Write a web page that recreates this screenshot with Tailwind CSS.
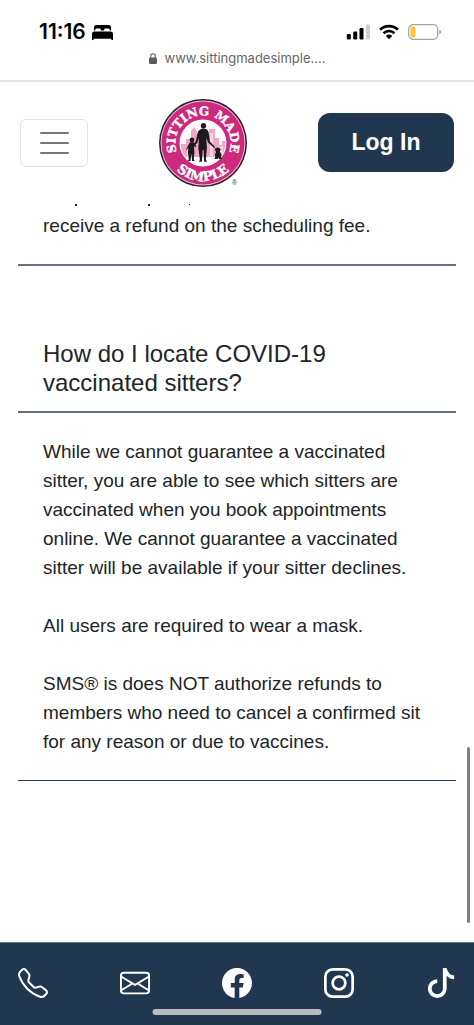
<!DOCTYPE html>
<html lang="en">
<head>
<meta charset="utf-8">
<meta name="viewport" content="width=device-width, initial-scale=1">
<title>Sitting Made Simple</title>
<script src="https://cdn.jsdelivr.net/npm/@tailwindcss/browser@4"></script>
</head>
<body class="relative flex min-h-screen flex-col bg-white font-['Liberation_Sans',Arial,sans-serif] text-[#212529]">

<!-- Phone status bar and address -->
<div class="flex flex-col border-b-2 border-[#e5e5e5] pt-5 pb-[10px] font-[Inter,sans-serif]">
  <div class="flex h-6 items-center justify-between pr-8 pl-[39px] text-black">
    <div class="flex items-center gap-[6px]">
      <span class="text-[21px] leading-6 font-semibold">11:16</span>
      <svg class="h-[15px] w-[21px]" viewBox="0 0 21 15" aria-hidden="true"><path d="M2 5.600V2.500Q2 0 4.500 0h12q2.500 0 2.500 2.500v3.100h-1.300v-.9q0-1.300-1.300-1.300h-3q-1.200 0-1.200 1.200v1H8.800v-1q0-1.200-1.200-1.200h-3Q3.300 3.400 3.300 4.700v.9zM0 9q0-2.400 2.400-2.400h16.200Q21 6.600 21 9v6h-1.600v-1.200H1.600V15H0z"/></svg>
    </div>
    <div class="flex items-center gap-[9px]">
      <svg class="h-4 w-6" viewBox="0 0 24 16" aria-hidden="true"><rect x="0.800" y="10" width="4" height="5.500" rx="1.200"/><rect x="7.200" y="7.500" width="4" height="8" rx="1.200"/><rect x="13.500" y="4" width="4" height="11.500" rx="1.200"/><rect x="19.900" y="0.500" width="4" height="15" rx="1.200" fill="#cfcfcf"/></svg>
      <svg class="h-4 w-5" viewBox="0 0 21 16" aria-hidden="true"><g fill="none" stroke="#000" stroke-width="2.800"><path d="M1.200 5.600a13.200 13.200 0 0 1 18.600 0"/><path d="M4.800 9.300a8.100 8.100 0 0 1 11.400 0"/></g><path d="M10.500 15.600l-3.400-3.500a4.900 4.900 0 0 1 6.800 0z"/></svg>
      <svg class="h-4 w-[34px]" viewBox="0 0 34 16" aria-hidden="true"><rect x="0.700" y="0.700" width="29" height="14.600" rx="4.500" fill="#fff" stroke="#a5a09b" stroke-width="1.200"/><rect x="2.500" y="2.500" width="5" height="11" rx="2" fill="#f7c73a"/><path d="M31.300 5.800q1.800.6 1.800 2.200t-1.800 2.200z" fill="#999"/></svg>
    </div>
  </div>
  <div class="mt-[2px] flex h-6 items-center justify-center gap-2 text-[#65656a]">
    <svg class="h-[11px] w-2" viewBox="0 0 8 11" aria-hidden="true"><rect y="4.500" width="8" height="6.500" rx="1.300" fill="#5d5d61"/><path d="M1.700 5V3a2.300 2.300 0 0 1 4.600 0v2" fill="none" stroke="#5d5d61" stroke-width="1.100"/></svg>
    <span class="text-[13px] leading-6">www.sittingmadesimple....</span>
  </div>
</div>

<header class="flex h-[121px] shrink-0 items-center justify-between px-5">
  <button type="button" aria-label="Menu" class="flex h-12 w-[68px] flex-col items-center justify-center gap-2 rounded-md border border-[#e3e3e3]">
    <span class="h-[2px] w-[29px] rounded bg-[#777]"></span>
    <span class="h-[2px] w-[29px] rounded bg-[#777]"></span>
    <span class="h-[2px] w-[29px] rounded bg-[#777]"></span>
  </button>
  <a href="#" aria-label="Sitting Made Simple home">
    <svg class="size-[88px] overflow-visible" viewBox="0 0 88 88">
      <defs>
        <path id="arc-top" d="M28 66.500A27.600 27.600 0 1 1 60 66.500"/>
        <path id="arc-bottom" d="M6 44A38 38 0 0 0 82 44"/>
        <clipPath id="disc"><circle cx="44" cy="44" r="22.500"/></clipPath>
      </defs>
      <circle cx="44" cy="44" r="44" fill="#2c2030"/>
      <circle cx="44" cy="44" r="42.500" fill="#f3bdd6"/>
      <circle cx="44" cy="44" r="41.500" fill="#cb2a7d"/>
      <circle cx="44" cy="44" r="23.500" fill="#fff"/>
      <g clip-path="url(#disc)">
        <path fill="#f0a6c6" d="M22 58V45h5v-5h5v-8l3-4 3 4v7h4V27h4v8h4v-5h6v9h4v7h3v-4h5v16z"/>
        <path fill="#f8d1e1" d="M28 48h3v10h-3zM51 34h3v24h-3zM61 47h3v11h-3z"/>
      </g>
      <g fill="#1d1a1f">
        <circle cx="44.500" cy="26.800" r="2.700"/>
        <path d="M41 30.500q3.500-1.500 7 0 1.600 1 2 5l.9 7 4.900 5.300-.9.900-5.700-5-1.900-5 .6 10-1 12 1.200 2h-3l-.6-12h-.8l-.8 12h-3l1-2-1.600-12 .8-10-1.700 5-5 5-1-.9 4.400-5.500 1.400-7q.6-3.800 2.800-4.800z"/>
        <circle cx="33" cy="41" r="2.400"/>
        <path d="M30.700 43.500q2.300-1 4.400 0l2.300 4-1 .8-1.400-1.500.4 7-.6 6.500 1 1.700h-2.700l-.5-6.500h-.4l-.7 6.500h-2.700l1-1.700-.8-6.500.2-5-1.400 2.300-.7-.6z"/>
        <path d="M55.700 50.500l1.300-1.500q1.700-1.200 3.300 0l1.500 1.500-1 2 1.700 3-.4 3 1.200 1.500h-3.200l-.7-1.500-.8 1.500h-3.400l1-1.700-.3-2.800 1.200-2.500z"/>
      </g>
      <path d="M54.500 47l3 4" stroke="#1d1a1f" stroke-width="0.600"/>
      <g fill="#fff" stroke="#fff" stroke-width="0.400" font-family="'DejaVu Serif', serif" font-weight="700" text-anchor="middle">
        <text font-size="12"><textPath href="#arc-top" startOffset="50%">SITTING MADE</textPath></text>
        <text font-size="13"><textPath href="#arc-bottom" startOffset="50%">SIMPLE</textPath></text>
      </g>
      <text x="73" y="86" font-family="Liberation Sans, sans-serif" font-size="7" fill="#333">®</text>
    </svg>
  </a>
  <a href="#" class="flex h-[59px] w-[136px] items-center justify-center rounded-xl bg-[#213750] text-[23px] font-bold text-white">Log In</a>
</header>

<main class="flex flex-1 flex-col px-[18px]">
  <section class="border-b-2 border-[#667180] px-[25px] pb-6">
    <!-- Tips of the line that scrolls under the header -->
    <svg class="h-2 w-full" aria-hidden="true" fill="#212529"><rect x="32" y="1" width="2" height="2"/><rect x="105" y="1" width="2" height="2"/><rect x="146" y="1" width="1" height="1"/></svg>
    <p class="text-[19px] leading-[29px]">receive a refund on the scheduling fee.</p>
  </section>
  <section class="mt-[73px]">
    <h2 class="border-b-2 border-[#667180] px-[25px] pb-[14px] text-2xl leading-[29px]">How do I locate COVID-19<br>vaccinated sitters?</h2>
    <div class="flex flex-col gap-[29px] border-b border-[#213750] px-[25px] py-6 text-[19px] leading-[29px]">
      <p>While we cannot guarantee a vaccinated<br>sitter, you are able to see which sitters are<br>vaccinated when you book appointments<br>online. We cannot guarantee a vaccinated<br>sitter will be available if your sitter declines.</p>
      <p>All users are required to wear a mask.</p>
      <p>SMS® is does NOT authorize refunds to<br>members who need to cancel a confirmed sit<br>for any reason or due to vaccines.</p>
    </div>
  </section>
</main>

<footer class="relative h-[83px] shrink-0 border-t border-[#6b7785] bg-[#213750] px-[18px] pt-[25px] text-white">
  <nav class="flex items-center justify-between" aria-label="Contact">
    <a href="#" aria-label="Phone"><svg class="size-[30px]" viewBox="0 0 16 16" fill="currentColor"><path d="M3.654 1.328a.678.678 0 0 0-1.015-.063L1.605 2.3c-.483.484-.661 1.169-.45 1.77a17.6 17.6 0 0 0 4.168 6.608 17.6 17.6 0 0 0 6.608 4.168c.601.211 1.286.033 1.77-.45l1.034-1.034a.678.678 0 0 0-.063-1.015l-2.307-1.794a.68.68 0 0 0-.58-.122l-2.19.547a1.75 1.75 0 0 1-1.657-.459L5.482 8.062a1.75 1.75 0 0 1-.46-1.657l.548-2.19a.68.68 0 0 0-.122-.58zM1.884.511a1.745 1.745 0 0 1 2.612.163L6.29 2.98c.329.423.445.974.315 1.494l-.547 2.19a.68.68 0 0 0 .178.643l2.457 2.457a.68.68 0 0 0 .644.178l2.189-.547a1.75 1.75 0 0 1 1.494.315l2.306 1.794c.829.645.905 1.87.163 2.611l-1.034 1.034c-.74.74-1.846 1.065-2.877.702a18.600 18.600 0 0 1-7.010-4.420 18.600 18.600 0 0 1-4.420-7.009c-.362-1.030-.037-2.137.703-2.877z"/></svg></a>
    <a href="#" aria-label="Email"><svg class="size-[30px]" viewBox="0 0 16 16" fill="currentColor"><path d="M0 4a2 2 0 0 1 2-2h12a2 2 0 0 1 2 2v8a2 2 0 0 1-2 2H2a2 2 0 0 1-2-2zm2-1a1 1 0 0 0-1 1v.217l7 4.200 7-4.200V4a1 1 0 0 0-1-1zm13 2.383-4.708 2.825L15 11.105zm-.034 6.876-5.640-3.471L8 9.583l-1.326-.795-5.640 3.470A1 1 0 0 0 2 13h12a1 1 0 0 0 .966-.741M1 11.105l4.708-2.897L1 5.383z"/></svg></a>
    <a href="#" aria-label="Facebook"><svg class="size-[30px]" viewBox="0 0 16 16" fill="currentColor"><path d="M16 8.049c0-4.446-3.582-8.050-8-8.050C3.580 0-.002 3.603-.002 8.050c0 4.017 2.926 7.347 6.750 7.951v-5.625h-2.030V8.050H6.750V6.275c0-2.017 1.195-3.131 3.022-3.131.876 0 1.791.157 1.791.157v1.980h-1.009c-.993 0-1.303.621-1.303 1.258v1.510h2.218l-.354 2.326H9.250V16c3.824-.604 6.750-3.934 6.750-7.951"/></svg></a>
    <a href="#" aria-label="Instagram"><svg class="size-[30px]" viewBox="0 0 16 16" fill="none" stroke="currentColor" stroke-width="1.440"><rect x="0.720" y="0.720" width="14.560" height="14.560" rx="3.900"/><circle cx="8" cy="8" r="3.390"/><circle cx="12.270" cy="3.730" r="0.960" fill="currentColor" stroke="none"/></svg></a>
    <a href="#" aria-label="TikTok"><svg class="size-[30px]" viewBox="0 0 16 16" fill="currentColor"><path d="M9 0h1.980c.144.715.540 1.617 1.235 2.512C12.895 3.389 13.797 4 15 4v2c-1.753 0-3.070-.814-4-1.829V11a5 5 0 1 1-5-5v2a3 3 0 1 0 3 3z"/></svg></a>
  </nav>
  <!-- Home indicator -->
  <div class="absolute bottom-[10px] left-1/2 h-[6px] w-[169px] -translate-x-1/2 rounded-full bg-[#b9bbbd]"></div>
</footer>

<!-- Scroll position indicator -->
<div class="absolute right-1 bottom-[102px] h-[176px] w-[3px] rounded-full bg-[#7f7f7f]"></div>
</body>
</html>
